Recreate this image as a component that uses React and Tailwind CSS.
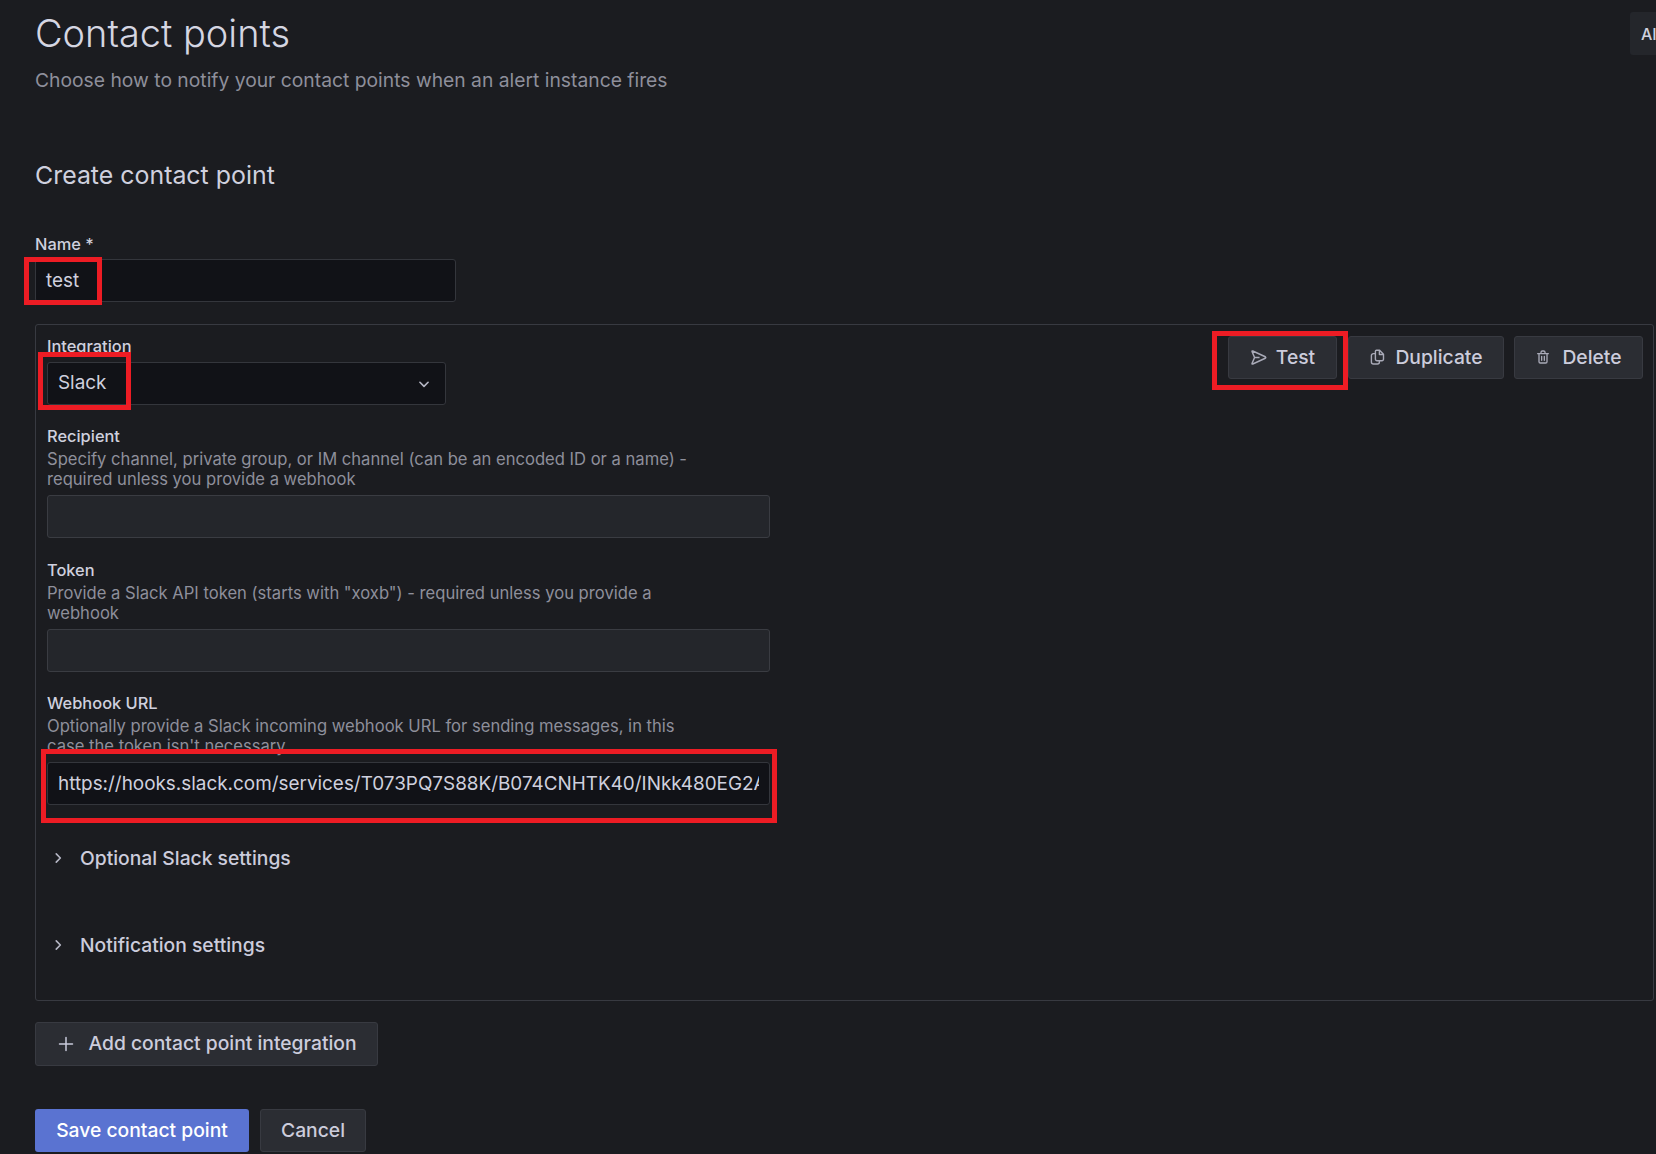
import React from "react";

function RedBox({ className }) {
  return <div className={"pointer-events-none absolute z-10 border-[5px] border-[#ed1c24] " + className} />;
}

function Field({ label, help, children, className = "" }) {
  return (
    <div className={"flex flex-col " + className}>
      <div className="h-[22px] text-[16.4px] leading-[22px] font-medium text-[#cfd0de]">{label}</div>
      {help && <div className="mb-[6px] mt-[2px] w-[660px] text-[16.6px] leading-[20px] text-[#8e8f9b]">{help}</div>}
      {children}
    </div>
  );
}

function DarkInput({ children, className = "" }) {
  return (
    <div className={"flex h-[43px] items-center rounded-[3px] border border-[#34363c] bg-[#111217] px-[10px] text-[18.9px] text-[#cfd0de] " + className}>
      {children}
    </div>
  );
}

function Btn({ children, className = "" }) {
  return (
    <button className={"flex h-[43px] items-center rounded-[3px] border border-[#383a41] bg-[#2b2d33] pb-[1px] text-[19.3px] font-medium text-[#ccccdc] " + className}>
      {children}
    </button>
  );
}

const Chevron = ({ dir }) => (
  <svg width="14" height="14" viewBox="0 0 12 12" fill="none" stroke="#b5b6c4" strokeWidth="1.4" strokeLinecap="round" strokeLinejoin="round">
    {dir === "down" ? <path d="M2.5 4.5 6 8l3.5-3.5" /> : <path d="M4.5 2.5 8 6 4.5 9.5" />}
  </svg>
);

export default function App() {
  return (
    <div className="relative h-[1154px] w-full overflow-hidden bg-[#1b1c20] pl-[35px] pr-[2px] font-['Inter',sans-serif]">
      <div className="absolute right-0 top-[12px] flex h-[43px] w-[26px] items-center overflow-hidden rounded-l-[3px] bg-[#24262b] pl-[11px] text-[16px] font-medium whitespace-nowrap text-[#cfd0de]">
        AI
      </div>

      <h1 className="pt-[8px] text-[37.95px] leading-[50px] font-light text-[#d5d6e2]">Contact points</h1>
      <p className="mt-[7px] text-[19.3px] leading-[30px] text-[#8e8f9b]">Choose how to notify your contact points when an alert instance fires</p>
      <h2 className="mt-[60px] text-[24.9px] leading-[40px] font-normal text-[#cfd0de]">Create contact point</h2>

      <div className="mt-[38px] w-[421px]">
        <div className="h-[26px] text-[16.4px] leading-[22px] font-medium text-[#cfd0de]">Name *</div>
        <div className="relative">
          <DarkInput className="pt-[2px]">test</DarkInput>
          <RedBox className="left-[-11px] top-[-2px] h-[48px] w-[78px]" />
        </div>
      </div>

      <div className="relative mt-[22px] h-[677px] rounded-[3px] border border-[#383a41] px-[11px] pt-[10px]">
        <div className="absolute right-[10px] top-[11px] flex gap-[10px]">
          <div className="relative">
            <Btn className="w-[109px] justify-center gap-[9px]">
              <svg width="17" height="17" viewBox="0 0 16 16" fill="none" stroke="#a9aab8" strokeWidth="1.4" strokeLinejoin="round">
                <path d="M2.6 1.9Q1.6 1.6 2 2.6L4.3 8 2 13.4Q1.6 14.4 2.6 14.1L14.4 8.7Q15.3 8 14.4 7.3Z M4.3 8H9" />
              </svg>
              Test
            </Btn>
            <RedBox className="left-[-16px] top-[-5px] h-[59px] w-[136px]" />
          </div>
          <Btn className="ml-[1px] w-[156px] justify-center gap-[10px]">
            <svg width="16" height="16" viewBox="0 0 16 16" fill="none" stroke="#a9aab8" strokeWidth="1.4" strokeLinejoin="round">
              <path d="M6.4 2.2a1 1 0 0 1 1-.9h3.2l3.9 3.9v5a1.5 1.5 0 0 1-1.5 1.5H8a1.6 1.6 0 0 1-1.6-1.6Z M10.4 1.3v4.2h4.1" />
              <path d="M6.2 4.6H4.4a2 2 0 0 0-2 2v6.4a2 2 0 0 0 2 2h4a2 2 0 0 0 2-2v-2" />
            </svg>
            Duplicate
          </Btn>
          <Btn className="w-[129px] justify-center gap-[11px]">
            <svg width="16" height="16" viewBox="0 0 24 24" fill="#a9aab8">
              <path d="M10,18a1,1,0,0,0,1-1V11a1,1,0,0,0-2,0v6A1,1,0,0,0,10,18ZM20,6H16V5a3,3,0,0,0-3-3H11A3,3,0,0,0,8,5V6H4A1,1,0,0,0,4,8H5V19a3,3,0,0,0,3,3h8a3,3,0,0,0,3-3V8h1a1,1,0,0,0,0-2ZM10,5a1,1,0,0,1,1-1h2a1,1,0,0,1,1,1V6H10Zm7,14a1,1,0,0,1-1,1H8a1,1,0,0,1-1-1V8H17Zm-3-1a1,1,0,0,0,1-1V11a1,1,0,0,0-2,0v6A1,1,0,0,0,14,18Z" />
            </svg>
            Delete
          </Btn>
        </div>

        <div className="w-[399px]">
          <div className="h-[27px] text-[16.4px] leading-[22px] font-medium text-[#cfd0de]">Integration</div>
          <div className="relative">
            <DarkInput className="justify-between pr-[14px]">
              Slack
              <Chevron dir="down" />
            </DarkInput>
            <RedBox className="left-[-9px] top-[-10px] h-[58px] w-[93px]" />
          </div>
        </div>

        <div className="mt-[20px] flex w-[723px] flex-col">
          <Field label="Recipient" help="Specify channel, private group, or IM channel (can be an encoded ID or a name) - required unless you provide a webhook">
            <div className="h-[43px] rounded-[3px] border border-[#3a3c42] bg-[#24262b]" />
          </Field>
          <Field className="mt-[21px]" label="Token" help={'Provide a Slack API token (starts with "xoxb") - required unless you provide a webhook'}>
            <div className="h-[43px] rounded-[3px] border border-[#3a3c42] bg-[#24262b]" />
          </Field>
          <Field className="mt-[20px]" label="Webhook URL" help="Optionally provide a Slack incoming webhook URL for sending messages, in this case the token isn't necessary">
            <div className="relative">
              <DarkInput className="overflow-hidden pt-[2px]">
                <span className="block overflow-hidden whitespace-nowrap">https://hooks.slack.com/services/T073PQ7S88K/B074CNHTK40/INkk480EG2AxQp7LmZr4</span>
              </DarkInput>
              <RedBox className="left-[-6px] top-[-13px] h-[74px] w-[736px]" />
            </div>
          </Field>
        </div>

        <div className="mt-[31px] flex h-[44px] items-center gap-[15px] pl-[4px] text-[19.3px] font-medium text-[#ccccdc]">
          <Chevron dir="right" />
          Optional Slack settings
        </div>
        <div className="mt-[43px] flex h-[44px] items-center gap-[15px] pl-[4px] text-[19.3px] font-medium text-[#ccccdc]">
          <Chevron dir="right" />
          Notification settings
        </div>
      </div>

      <Btn className="mt-[21px] h-[44px] w-[343px] justify-center gap-[12px]">
        <svg width="20" height="20" viewBox="0 0 20 20" fill="none" stroke="#c9cadb" strokeWidth="1.5" strokeLinecap="round">
          <path d="M10 3.5v13M3.5 10h13" />
        </svg>
        Add contact point integration
      </Btn>

      <div className="mt-[43px] flex gap-[11px]">
        <button className="flex h-[43px] w-[214px] items-center justify-center rounded-[3px] bg-[#5a73d1] pb-[1px] text-[19.3px] font-medium text-white">Save contact point</button>
        <Btn className="w-[106px] justify-center">Cancel</Btn>
      </div>
    </div>
  );
}
